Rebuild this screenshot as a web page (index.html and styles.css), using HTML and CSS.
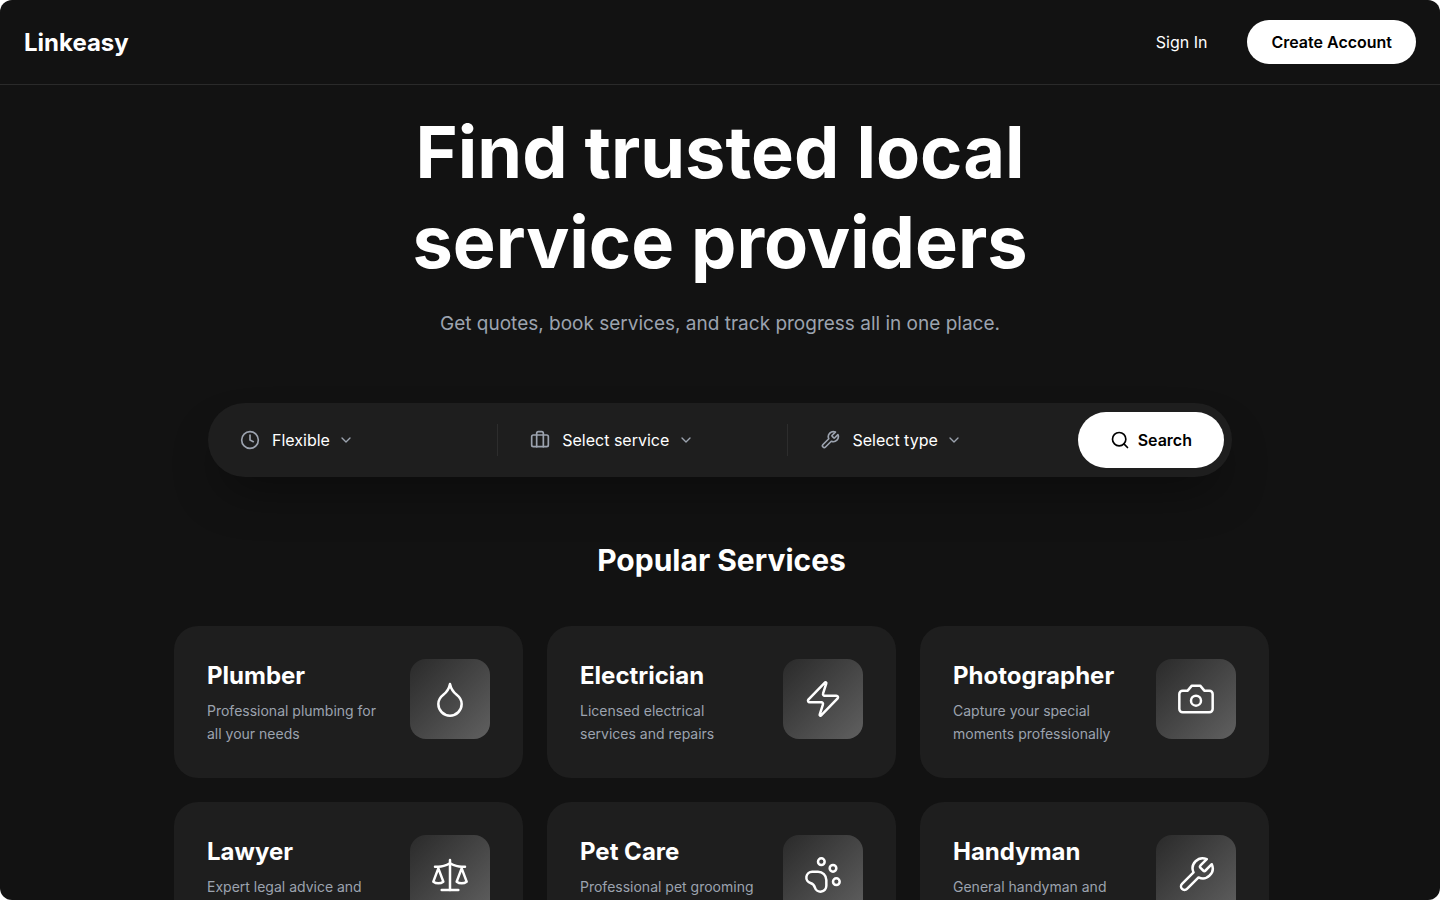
FILE: index.html
```html
<!DOCTYPE html>
<html lang="en">
<head>
<meta charset="utf-8">
<meta name="viewport" content="width=device-width, initial-scale=1">
<title>Linkeasy</title>
<link rel="stylesheet" href="styles.css">
</head>
<body>
<div class="shell">
  <header class="header">
    <a class="brand" href="#">Linkeasy</a>
    <nav class="nav">
      <a class="nav-link" href="#">Sign In</a>
      <button class="btn btn-account" type="button">Create Account</button>
    </nav>
  </header>
  <main>
    <section class="hero">
      <h1 class="hero-title">Find trusted local<br>service providers</h1>
      <p class="hero-text">Get quotes, book services, and track progress all in one place.</p>
      <form class="search">
        <div class="field">
          <svg class="icon" viewBox="0 0 24 24" aria-hidden="true"><circle cx="12" cy="12" r="10"/><path d="M12 6v6l4 2"/></svg>
          <label class="picker">
            <select class="select" aria-label="Time"><option>Flexible</option></select>
            <svg class="chevron" viewBox="0 0 24 24" aria-hidden="true"><path d="m6 9 6 6 6-6"/></svg>
          </label>
        </div>
        <div class="field">
          <svg class="icon" viewBox="0 0 24 24" aria-hidden="true"><path d="M16 20V4a2 2 0 0 0-2-2h-4a2 2 0 0 0-2 2v16"/><rect width="20" height="14" x="2" y="6" rx="2"/></svg>
          <label class="picker">
            <select class="select" aria-label="Service"><option>Select service</option></select>
            <svg class="chevron" viewBox="0 0 24 24" aria-hidden="true"><path d="m6 9 6 6 6-6"/></svg>
          </label>
        </div>
        <div class="field">
          <svg class="icon" viewBox="0 0 24 24" aria-hidden="true"><path d="M14.7 6.3a1 1 0 0 0 0 1.4l1.6 1.6a1 1 0 0 0 1.4 0l3.77-3.77a6 6 0 0 1-7.94 7.94l-6.91 6.91a2.12 2.12 0 0 1-3-3l6.91-6.91a6 6 0 0 1 7.94-7.94l-3.76 3.76z"/></svg>
          <label class="picker">
            <select class="select" aria-label="Type"><option>Select type</option></select>
            <svg class="chevron" viewBox="0 0 24 24" aria-hidden="true"><path d="m6 9 6 6 6-6"/></svg>
          </label>
        </div>
        <button class="btn btn-search" type="button">
          <svg class="icon" viewBox="0 0 24 24" aria-hidden="true"><circle cx="11" cy="11" r="8"/><path d="m21 21-4.3-4.3"/></svg>
          Search
        </button>
      </form>
    </section>
    <section class="services">
      <h2 class="services-title">Popular Services</h2>
      <div class="grid">
        <article class="card">
          <div class="card-body"><h3 class="card-title">Plumber</h3><p class="card-text">Professional plumbing for all your needs</p></div>
          <div class="tile"><svg class="tile-icon" viewBox="0 0 24 24" aria-hidden="true"><path d="M12 22a7 7 0 0 0 7-7c0-2-1-3.9-3-5.5s-3.5-4-4-6.5c-.5 2.5-2 4.9-4 6.5C6 11.1 5 13 5 15a7 7 0 0 0 7 7z"/></svg></div>
        </article>
        <article class="card">
          <div class="card-body"><h3 class="card-title">Electrician</h3><p class="card-text">Licensed electrical services and repairs</p></div>
          <div class="tile"><svg class="tile-icon" viewBox="0 0 24 24" aria-hidden="true"><path d="M4 14a1 1 0 0 1-.78-1.63l9.9-10.2a.5.5 0 0 1 .86.46l-1.92 6.02A1 1 0 0 0 13 10h7a1 1 0 0 1 .78 1.63l-9.9 10.2a.5.5 0 0 1-.86-.46l1.92-6.02A1 1 0 0 0 11 14z"/></svg></div>
        </article>
        <article class="card">
          <div class="card-body"><h3 class="card-title">Photographer</h3><p class="card-text">Capture your special moments professionally</p></div>
          <div class="tile"><svg class="tile-icon" viewBox="0 0 24 24" aria-hidden="true"><path d="M14.5 4h-5L7 7H4a2 2 0 0 0-2 2v9a2 2 0 0 0 2 2h16a2 2 0 0 0 2-2V9a2 2 0 0 0-2-2h-3l-2.5-3z"/><circle cx="12" cy="13" r="3"/></svg></div>
        </article>
        <article class="card">
          <div class="card-body"><h3 class="card-title">Lawyer</h3><p class="card-text">Expert legal advice and</p></div>
          <div class="tile"><svg class="tile-icon" viewBox="0 0 24 24" aria-hidden="true"><path d="m16 16 3-8 3 8c-.87.65-1.92 1-3 1s-2.13-.35-3-1Z"/><path d="m2 16 3-8 3 8c-.87.65-1.92 1-3 1s-2.13-.35-3-1Z"/><path d="M7 21h10"/><path d="M12 3v18"/><path d="M3 7h2c2 0 5-1 7-2 2 1 5 2 7 2h2"/></svg></div>
        </article>
        <article class="card">
          <div class="card-body"><h3 class="card-title">Pet Care</h3><p class="card-text">Professional pet grooming</p></div>
          <div class="tile"><svg class="tile-icon" viewBox="0 0 24 24" aria-hidden="true"><circle cx="11" cy="4" r="2"/><circle cx="18" cy="8" r="2"/><circle cx="20" cy="16" r="2"/><path d="M9 10a5 5 0 0 1 5 5v3.5a3.5 3.5 0 0 1-6.84 1.045Q6.52 17.48 4.46 16.84A3.5 3.5 0 0 1 5.5 10Z"/></svg></div>
        </article>
        <article class="card">
          <div class="card-body"><h3 class="card-title">Handyman</h3><p class="card-text">General handyman and</p></div>
          <div class="tile"><svg class="tile-icon" viewBox="0 0 24 24" aria-hidden="true"><path d="M14.7 6.3a1 1 0 0 0 0 1.4l1.6 1.6a1 1 0 0 0 1.4 0l3.77-3.77a6 6 0 0 1-7.94 7.94l-6.91 6.91a2.12 2.12 0 0 1-3-3l6.91-6.91a6 6 0 0 1 7.94-7.94l-3.76 3.76z"/></svg></div>
        </article>
      </div>
    </section>
  </main>
</div>
</body>
</html>
```

FILE: styles.css
```css
* { box-sizing: border-box; margin: 0; }

html { background: #fff; }

body {
  font-family: Inter, "Liberation Sans", sans-serif;
  font-size: 16px;
  line-height: 24px;
  color: #fff;
}

.shell {
  height: 100vh;
  overflow: hidden;
  border-radius: 12px;
  background: #121212;
}

.header {
  display: flex;
  align-items: center;
  justify-content: space-between;
  padding: 20px 24px;
  border-bottom: 1px solid #2a2a2a;
}

.brand {
  padding-top: 2px;
  font-size: 24px;
  line-height: 32px;
  font-weight: 700;
  color: inherit;
  text-decoration: none;
}

.nav { display: flex; align-items: center; gap: 24px; }

.nav-link {
  padding: 0 16px;
  color: inherit;
  text-decoration: none;
}

.btn {
  display: flex;
  align-items: center;
  gap: 8px;
  border: 0;
  border-radius: 28px;
  background: #fff;
  color: #000;
  font: inherit;
  font-weight: 600;
  cursor: pointer;
}

.btn-account { padding: 10px 24px; }
.btn-search { padding: 16px 32px; }

.hero {
  display: flex;
  flex-direction: column;
  align-items: center;
  padding: 22px 24px 0;
  text-align: center;
}

.hero-title { font-size: 72px; line-height: 90px; font-weight: 700; }

.hero-text {
  margin-top: 23px;
  font-size: 19px;
  line-height: 28px;
  color: #9ca3af;
}

.search {
  display: flex;
  align-items: center;
  width: 100%;
  max-width: 1024px;
  margin-top: 65px;
  padding: 9px 8px 9px 0;
  border-radius: 37px;
  background: #1e1e1e;
  box-shadow: 0 24px 48px -12px rgba(0, 0, 0, 0.4);
}

.field {
  display: flex;
  flex: 1;
  align-items: center;
  gap: 12px;
  height: 32px;
  padding: 0 32px;
}

.field + .field { border-left: 1px solid #2d2d2d; }

.icon, .chevron, .tile-icon {
  flex: none;
  fill: none;
  stroke: currentColor;
  stroke-width: 2;
  stroke-linecap: round;
  stroke-linejoin: round;
}

.icon { width: 20px; height: 20px; }
.chevron { width: 16px; height: 16px; }
.field .icon, .chevron { color: #9ca3af; }

.picker { display: flex; align-items: center; gap: 8px; }

.select {
  appearance: none;
  padding: 0;
  border: 0;
  background: none;
  color: inherit;
  font: inherit;
}

.services {
  max-width: 1098px;
  margin: 65px auto 0;
  padding-left: 3px;
}

.services-title {
  margin-bottom: 48px;
  font-size: 30px;
  line-height: 36px;
  font-weight: 700;
  text-align: center;
}

.grid {
  display: grid;
  grid-template-columns: repeat(3, 1fr);
  gap: 24px;
}

.card {
  display: flex;
  align-items: flex-start;
  justify-content: space-between;
  gap: 24px;
  padding: 33px;
  border-radius: 24px;
  background: #1e1e1e;
}

.card-title { margin-bottom: 6px; font-size: 24px; line-height: 34px; font-weight: 700; }
.card-text { max-width: 176px; font-size: 14px; line-height: 23px; color: #9ca3af; }

.tile {
  display: flex;
  flex: none;
  align-items: center;
  justify-content: center;
  width: 80px;
  height: 80px;
  border-radius: 16px;
  background: linear-gradient(135deg, #2a2a2a, #606060);
}

.tile-icon { width: 40px; height: 40px; stroke-width: 1.5; }
```
